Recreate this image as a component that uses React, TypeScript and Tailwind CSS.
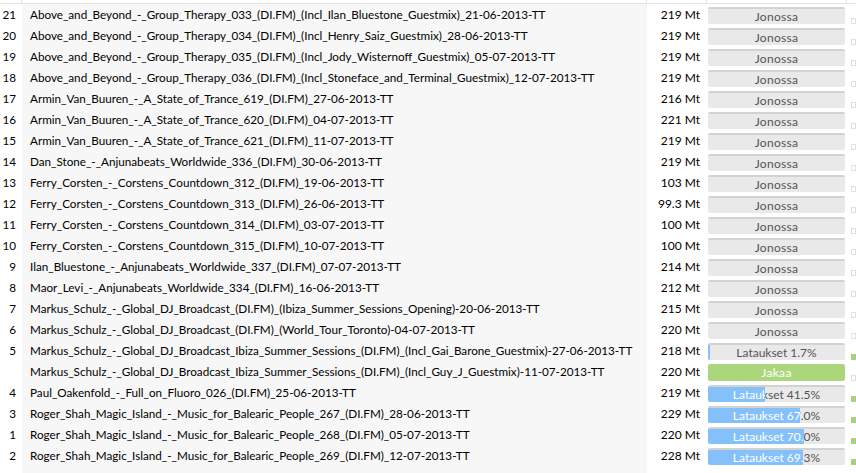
import React from "react";

type Row = {
  num: string;
  name: string;
  size: string;
  status: "queued" | "down" | "seed";
  pct?: number;
};

const rows: Row[] = [
  { num: "21", name: "Above_and_Beyond_-_Group_Therapy_033_(DI.FM)_(Incl_Ilan_Bluestone_Guestmix)_21-06-2013-TT", size: "219 Mt", status: "queued" },
  { num: "20", name: "Above_and_Beyond_-_Group_Therapy_034_(DI.FM)_(Incl_Henry_Saiz_Guestmix)_28-06-2013-TT", size: "219 Mt", status: "queued" },
  { num: "19", name: "Above_and_Beyond_-_Group_Therapy_035_(DI.FM)_(Incl_Jody_Wisternoff_Guestmix)_05-07-2013-TT", size: "219 Mt", status: "queued" },
  { num: "18", name: "Above_and_Beyond_-_Group_Therapy_036_(DI.FM)_(Incl_Stoneface_and_Terminal_Guestmix)_12-07-2013-TT", size: "219 Mt", status: "queued" },
  { num: "17", name: "Armin_Van_Buuren_-_A_State_of_Trance_619_(DI.FM)_27-06-2013-TT", size: "216 Mt", status: "queued" },
  { num: "16", name: "Armin_Van_Buuren_-_A_State_of_Trance_620_(DI.FM)_04-07-2013-TT", size: "221 Mt", status: "queued" },
  { num: "15", name: "Armin_Van_Buuren_-_A_State_of_Trance_621_(DI.FM)_11-07-2013-TT", size: "219 Mt", status: "queued" },
  { num: "14", name: "Dan_Stone_-_Anjunabeats_Worldwide_336_(DI.FM)_30-06-2013-TT", size: "219 Mt", status: "queued" },
  { num: "13", name: "Ferry_Corsten_-_Corstens_Countdown_312_(DI.FM)_19-06-2013-TT", size: "103 Mt", status: "queued" },
  { num: "12", name: "Ferry_Corsten_-_Corstens_Countdown_313_(DI.FM)_26-06-2013-TT", size: "99.3 Mt", status: "queued" },
  { num: "11", name: "Ferry_Corsten_-_Corstens_Countdown_314_(DI.FM)_03-07-2013-TT", size: "100 Mt", status: "queued" },
  { num: "10", name: "Ferry_Corsten_-_Corstens_Countdown_315_(DI.FM)_10-07-2013-TT", size: "100 Mt", status: "queued" },
  { num: "9", name: "Ilan_Bluestone_-_Anjunabeats_Worldwide_337_(DI.FM)_07-07-2013-TT", size: "214 Mt", status: "queued" },
  { num: "8", name: "Maor_Levi_-_Anjunabeats_Worldwide_334_(DI.FM)_16-06-2013-TT", size: "212 Mt", status: "queued" },
  { num: "7", name: "Markus_Schulz_-_Global_DJ_Broadcast_(DI.FM)_(Ibiza_Summer_Sessions_Opening)-20-06-2013-TT", size: "215 Mt", status: "queued" },
  { num: "6", name: "Markus_Schulz_-_Global_DJ_Broadcast_(DI.FM)_(World_Tour_Toronto)-04-07-2013-TT", size: "220 Mt", status: "queued" },
  { num: "5", name: "Markus_Schulz_-_Global_DJ_Broadcast_Ibiza_Summer_Sessions_(DI.FM)_(Incl_Gai_Barone_Guestmix)-27-06-2013-TT", size: "218 Mt", status: "down", pct: 1.7 },
  { num: "", name: "Markus_Schulz_-_Global_DJ_Broadcast_Ibiza_Summer_Sessions_(DI.FM)_(Incl_Guy_J_Guestmix)-11-07-2013-TT", size: "220 Mt", status: "seed" },
  { num: "4", name: "Paul_Oakenfold_-_Full_on_Fluoro_026_(DI.FM)_25-06-2013-TT", size: "219 Mt", status: "down", pct: 41.5 },
  { num: "3", name: "Roger_Shah_Magic_Island_-_Music_for_Balearic_People_267_(DI.FM)_28-06-2013-TT", size: "229 Mt", status: "down", pct: 67.0 },
  { num: "1", name: "Roger_Shah_Magic_Island_-_Music_for_Balearic_People_268_(DI.FM)_05-07-2013-TT", size: "220 Mt", status: "down", pct: 70.0 },
  { num: "2", name: "Roger_Shah_Magic_Island_-_Music_for_Balearic_People_269_(DI.FM)_12-07-2013-TT", size: "228 Mt", status: "down", pct: 69.3 },
];

function StatusBar({ row }: { row: Row }) {
  if (row.status === "seed") {
    return (
      <div className="h-[17px] w-[137px] rounded-[2px] bg-[#acd67c] flex items-center justify-center text-white text-[12px] tracking-[0.3px]">
        Jakaa
      </div>
    );
  }
  if (row.status === "queued") {
    return (
      <div className="h-[17px] w-[137px] rounded-[2px] bg-[#e9e9e9] border-t-2 border-[#d2d2d2] flex items-center justify-center text-[#555] text-[12px] tracking-[0.3px]">
        Jonossa
      </div>
    );
  }
  const label = `Lataukset ${row.pct!.toFixed(1)}%`;
  const fill = Math.max(2, Math.round((137 * row.pct!) / 100));
  return (
    <div className="relative h-[17px] w-[137px] rounded-[2px] bg-[#e9e9e9] border-t-2 border-[#d2d2d2] overflow-hidden">
      <div className="absolute inset-0 flex items-center justify-center text-[#555] text-[12px]">
        {label}
      </div>
      <div
        className="absolute left-0 top-[-2px] bottom-0 bg-[#84c1fb] overflow-hidden"
        style={{ width: fill }}
      >
        <div className="w-[137px] h-full flex items-center justify-center pt-[2px] text-white text-[12px]">
          {label}
        </div>
      </div>
    </div>
  );
}

export default function App() {
  return (
    <div className="w-[856px] h-[473px] overflow-hidden bg-white text-black text-[11.7px] font-['Lato',sans-serif]">
      <div className="grid grid-cols-[22px_625px_60px_140px_9px] h-[4px] border-b border-[#e3e3e3]">
        <div className="border-r border-[#e3e3e3]" />
        <div className="border-r border-[#e3e3e3]" />
        <div className="border-r border-[#e3e3e3]" />
        <div className="border-r border-[#e3e3e3]" />
        <div />
      </div>
      <div className="grid grid-cols-[22px_625px_60px_140px_9px]">
        {rows.map((r, i) => (
          <React.Fragment key={i}>
            <div className="h-[21px] flex items-center justify-end pr-[6px] whitespace-nowrap">{r.num}</div>
            <div className="h-[21px] flex items-center pl-[8px] bg-[#f7f7f7] whitespace-nowrap overflow-hidden">
              {r.name}
            </div>
            <div className="h-[21px] flex items-center justify-end pr-[7px] text-[12px] whitespace-nowrap">{r.size}</div>
            <div className="h-[21px] flex items-center pl-[1px] pt-[2px]">
              <StatusBar row={r} />
            </div>
            <div className="h-[21px] flex items-end pb-[1px] pl-[4px]">
              {r.status === "down" ? (
                <div className="w-[6px] h-[6px] bg-[#a6d477]" />
              ) : (
                <div className="w-[6px] h-[6px] border border-[#e0e0e0]" />
              )}
            </div>
          </React.Fragment>
        ))}
        <div className="h-[20px]" />
        <div className="h-[20px] bg-[#f7f7f7]" />
      </div>
    </div>
  );
}
